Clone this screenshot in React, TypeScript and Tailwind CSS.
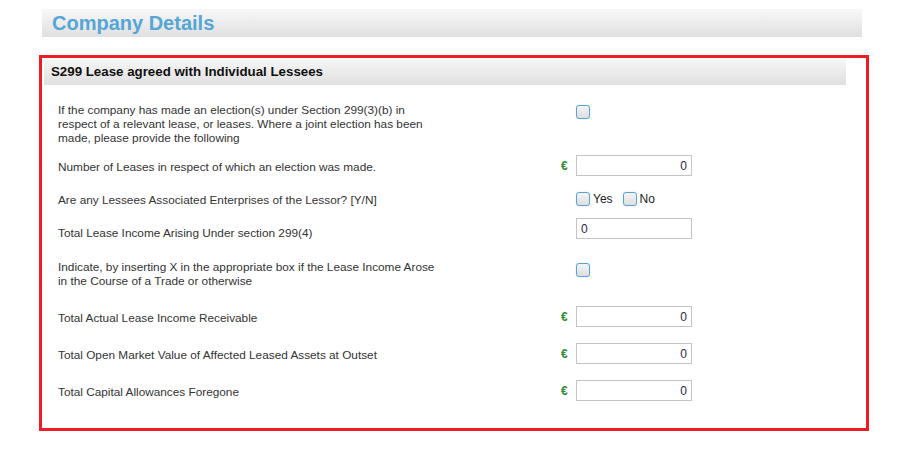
import React from "react";

const labelFont = { fontFamily: '"Liberation Sans", Arial, sans-serif' };

function Checkbox() {
  return (
    <span className="inline-block w-[14px] h-[14px] rounded-[3px] border-[1.5px] border-[#5aa2d6] bg-gradient-to-b from-[#f4f4f4] to-[#dedede] shadow-[0_0_1px_#8ec3ea]" />
  );
}

function Euro() {
  return (
    <span className="w-[15px] shrink-0 text-[12px] font-bold text-[#2e8b2e]" style={{ fontFamily: '"Liberation Sans", Arial, sans-serif' }}>
      €
    </span>
  );
}

function NumInput({ value, left }: { value: string; left?: boolean }) {
  return (
    <div
      className={`w-[116px] h-[21px] border border-[#c4c4c4] bg-white flex items-center px-[4px] text-[12px] text-[#2a2a3a] ${left ? "justify-start" : "justify-end"}`}
      style={{ fontFamily: '"Liberation Sans", Arial, sans-serif' }}
    >
      {value}
    </div>
  );
}

export default function App() {
  return (
    <div className="w-[903px] h-[455px] bg-white relative">
      <div className="pt-[9px] pl-[42px]">
        <div className="w-[820px] h-[28px] bg-gradient-to-b from-[#f8f8f8] to-[#e0e0e0] flex items-center pl-[10px]">
          <span className="text-[20px] font-bold text-[#54a6d6] leading-none" style={{ fontFamily: '"Liberation Sans", Arial, sans-serif' }}>
            Company Details
          </span>
        </div>
      </div>

      <div className="ml-[39px] mt-[18px] w-[830px] h-[376px] border-[3px] border-[#ee1c25] pt-[1px] pl-[2px]">
        <div className="w-[802px] h-[26px] bg-gradient-to-b from-[#f6f6f6] to-[#e0e0e0] flex items-center pl-[7px]">
          <span className="text-[13.3px] font-bold text-[#111]" style={{ fontFamily: '"Liberation Sans", Arial, sans-serif' }}>
            S299 Lease agreed with Individual Lessees
          </span>
        </div>

        <div className="pl-[14px] text-[11.8px] text-[#333] leading-[14px]" style={labelFont}>
          {/* Row 1 */}
          <div className="flex items-start mt-[18px] h-[42px]">
            <div className="w-[503px]">
              If the company has made an election(s) under Section 299(3)(b) in
              <br />
              respect of a relevant lease, or leases. Where a joint election has been
              <br />
              made, please provide the following
            </div>
            <span className="w-[15px]" />
            <span className="mt-[2px] flex"><Checkbox /></span>
          </div>

          {/* Row 2 */}
          <div className="flex items-center mt-[10px] h-[21px]">
            <div className="w-[503px] mt-[3px]">Number of Leases in respect of which an election was made.</div>
            <Euro />
            <NumInput value="0" />
          </div>

          {/* Row 3 */}
          <div className="flex items-center mt-[12px] h-[22px]">
            <div className="w-[503px] mt-[1px]">Are any Lessees Associated Enterprises of the Lessor? [Y/N]</div>
            <span className="w-[15px]" />
            <div className="flex items-center">
              <Checkbox />
              <span className="ml-[3px] text-[12px] text-[#222]">Yes</span>
              <span className="ml-[10px] flex"><Checkbox /></span>
              <span className="ml-[3px] text-[12px] text-[#222]">No</span>
            </div>
          </div>

          {/* Row 4 */}
          <div className="flex items-center mt-[8px] h-[21px]">
            <div className="w-[503px] mt-[8px]">Total Lease Income Arising Under section 299(4)</div>
            <span className="w-[15px]" />
            <NumInput value="0" left />
          </div>

          {/* Row 5 */}
          <div className="flex items-start mt-[21px] h-[28px]">
            <div className="w-[503px]">
              Indicate, by inserting X in the appropriate box if the Lease Income Arose
              <br />
              in the Course of a Trade or otherwise
            </div>
            <span className="w-[15px]" />
            <span className="mt-[3px] flex"><Checkbox /></span>
          </div>

          {/* Row 6 */}
          <div className="flex items-center mt-[18px] h-[21px]">
            <div className="w-[503px] mt-[3px]">Total Actual Lease Income Receivable</div>
            <Euro />
            <NumInput value="0" />
          </div>

          {/* Row 7 */}
          <div className="flex items-center mt-[16px] h-[21px]">
            <div className="w-[503px] mt-[2px]">Total Open Market Value of Affected Leased Assets at Outset</div>
            <Euro />
            <NumInput value="0" />
          </div>

          {/* Row 8 */}
          <div className="flex items-center mt-[16px] h-[21px]">
            <div className="w-[503px] mt-[2px]">Total Capital Allowances Foregone</div>
            <Euro />
            <NumInput value="0" />
          </div>
        </div>
      </div>
    </div>
  );
}
